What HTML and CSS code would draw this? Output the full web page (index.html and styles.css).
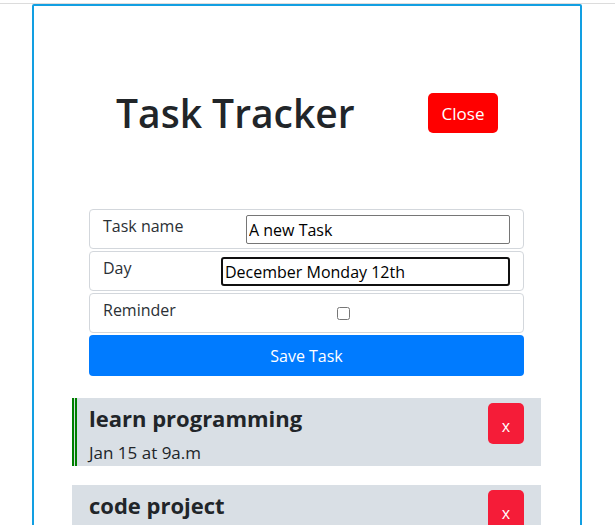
FILE: index.html
```html
<!DOCTYPE html>
<html lang="en">
<head>
<meta charset="utf-8">
<title>Task Tracker</title>
<link rel="stylesheet" href="styles.css">
</head>
<body>
<div class="topline"></div>
<div class="container">
  <header class="header">
    <h1 class="title">Task Tracker</h1>
    <button class="btn-close" type="button">Close</button>
  </header>
  <form class="add-form">
    <div class="form-row">
      <label class="lbl">Task name</label>
      <input class="field field-name" type="text" value="A new Task">
    </div>
    <div class="form-row">
      <label class="lbl">Day</label>
      <input class="field field-day" type="text" value="December Monday 12th">
    </div>
    <div class="form-row">
      <label class="lbl lbl-reminder">Reminder</label>
      <input class="check" type="checkbox">
    </div>
    <button class="btn-save" type="button">Save Task</button>
  </form>
  <div class="tasks">
    <div class="task reminder">
      <div class="task-info">
        <h3 class="task-title">learn programming</h3>
        <p class="task-day">Jan 15 at 9a.m</p>
      </div>
      <button class="btn-del" type="button">x</button>
    </div>
    <div class="task">
      <div class="task-info">
        <h3 class="task-title">code project</h3>
        <p class="task-day">Feb 2 at 1p.m</p>
      </div>
      <button class="btn-del" type="button">x</button>
    </div>
  </div>
</div>
</body>
</html>
```
FILE: styles.css
```css
* { box-sizing: border-box; }
html, body { margin: 0; padding: 0; background: #fff; }
body {
  font-family: "Open Sans", "Noto Sans", sans-serif;
  color: #212529;
  overflow: hidden;
}
.topline {
  height: 4px;
  border-bottom: 1px solid #dcdcdc;
}
.container {
  width: 550px;
  margin: 0 0 0 32px;
  border: 2px solid #129fe2;
  border-radius: 2px;
  min-height: 700px;
}
.header {
  display: flex;
  align-items: center;
  justify-content: space-between;
  height: 80px;
  margin-top: 67px;
  padding: 0 82px;
}
.title {
  margin: 0;
  font-size: 39px;
  font-weight: 600;
  line-height: 1.2;
}
.btn-close {
  width: 70px;
  height: 40px;
  border: none;
  border-radius: 5px;
  background: #ff0000;
  color: #fff;
  font-family: inherit;
  font-size: 17px;
}
.add-form {
  margin: 56px 56px 0 55px;
}
.form-row {
  display: flex;
  align-items: center;
  height: 40px;
  margin-bottom: 2px;
  padding: 0 13px;
  border: 1px solid #d3d7dc;
  border-radius: 4px;
}
.lbl {
  align-self: flex-start;
  padding-top: 4px;
  font-size: 16px;
  line-height: 24px;
  color: #2b3035;
}
.lbl-reminder { width: 234px; flex: none; }
.field {
  margin-left: auto;
  height: 29px;
  padding: 2px 2px 0;
  font-family: inherit;
  font-size: 16px;
  color: #000;
  background: #fff;
}
.field-name {
  width: 264px;
  border: 1px solid #767676;
  border-radius: 2px;
}
.field-day {
  width: 289px;
  border: 2px solid #101010;
  border-radius: 3px;
  outline: none;
}
.check {
  margin: 0;
  width: 13px;
  height: 13px;
}
.btn-save {
  display: block;
  width: 100%;
  height: 41px;
  border: none;
  border-radius: 4px;
  background: #007bff;
  color: #fff;
  font-family: inherit;
  font-size: 16px;
}
.tasks {
  margin: 22px 39px 0 38px;
}
.task {
  display: flex;
  justify-content: space-between;
  align-items: flex-start;
  height: 68px;
  margin-bottom: 19px;
  padding: 0 17px 0 12px;
  background: #d9dfe5;
  border-left: 5px solid transparent;
}
.task.reminder {
  border-left: 5px double #008000;
}
.task-title {
  margin: 0;
  padding-top: 5px;
  font-size: 22px;
  font-weight: 700;
  line-height: 30px;
}
.task-day {
  margin: 9px 0 0;
  font-size: 17px;
  line-height: 22px;
}
.btn-del {
  width: 36px;
  height: 41px;
  margin-top: 5px;
  border: none;
  border-radius: 5px;
  background: #f51c38;
  color: #fff;
  font-family: inherit;
  font-size: 16px;
  padding-top: 6px;
}
```
